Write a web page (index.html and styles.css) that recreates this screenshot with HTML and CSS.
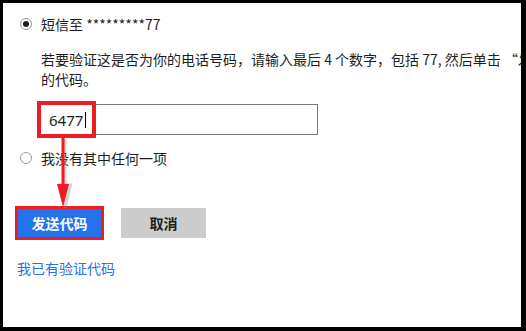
FILE: index.html
```html
<!DOCTYPE html>
<html lang="zh-CN">
<head>
<meta charset="utf-8">
<title>验证</title>
<link rel="stylesheet" href="styles.css">
</head>
<body>
<div class="frame">
  <div class="option">
    <span class="radio checked"></span>
    <span class="label">短信至 *********77</span>
  </div>
  <p class="hint">若要验证这是否为你的电话号码，请输入最后 4 个数字，包括 77, 然后单击 “发送代码”以获取你<br>的代码。</p>
  <div class="field">
    <div class="input"><span class="value">6477</span><span class="caret"></span></div>
    <div class="mark"></div>
  </div>
  <div class="option second">
    <span class="radio"></span>
    <span class="label">我没有其中任何一项</span>
  </div>
  <div class="actions">
    <button class="btn primary">发送代码</button>
    <button class="btn secondary">取消</button>
  </div>
  <a class="link" href="#">我已有验证代码</a>
  <svg class="arrow" width="26" height="76" viewBox="0 0 26 76">
    <path d="M13 4 V52 M7.5 50 L13 73 L18.5 50 Z" fill="#888" stroke="#888" stroke-width="3" opacity="0.35" transform="translate(2,1)"/>
    <rect x="11.5" y="4" width="3" height="48" fill="#ee1c25"/>
    <path d="M7 50 L13 73 L19 50 Z" fill="#ee1c25"/>
  </svg>
</div>
</body>
</html>
```

FILE: styles.css
```css
html, body {
  margin: 0;
  padding: 0;
  background: #000;
}
.frame {
  position: relative;
  margin: 3px 0 0 3px;
  width: 518px;
  height: 324px;
  background: #fff;
  overflow: hidden;
  box-sizing: border-box;
  padding: 11px 0 0 14px;
  font-family: "Noto Sans CJK SC", "Noto Sans", sans-serif;
  font-size: 14px;
  color: #1e1e1e;
}
.option {
  display: flex;
  align-items: center;
  height: 20px;
  line-height: 20px;
}
.option.second {
  margin-top: 13px;
}
.radio {
  width: 12px;
  height: 12px;
  margin-left: 3px;
  margin-right: 9px;
  border: 1px solid #9a9a9a;
  border-radius: 50%;
  box-sizing: border-box;
  display: flex;
  align-items: center;
  justify-content: center;
}
.radio.checked::after {
  content: "";
  width: 6px;
  height: 6px;
  border-radius: 50%;
  background: #1e1e1e;
}
.label {
  white-space: nowrap;
}
.hint {
  margin: 15px 0 0 24px;
  line-height: 20px;
  white-space: nowrap;
}
.field {
  position: relative;
  margin: 15px 0 0 20px;
  width: 281px;
}
.input {
  height: 31px;
  box-sizing: border-box;
  border: 1px solid #7a7a7a;
  display: flex;
  align-items: center;
  padding-left: 11px;
  font-family: "Noto Sans", "Open Sans", sans-serif;
  font-size: 15px;
  color: #1e1e1e;
}
.caret {
  width: 1px;
  height: 16px;
  margin-left: 2px;
  background: #000;
}
.mark {
  position: absolute;
  left: 0;
  top: -3px;
  width: 59px;
  height: 37px;
  box-sizing: border-box;
  border: 4px solid #ee1c25;
}
.actions {
  display: flex;
  gap: 19px;
  margin-top: 40px;
}
.btn {
  width: 85px;
  height: 30px;
  border: none;
  padding: 0;
  font-family: "Noto Sans CJK SC", "Noto Sans", sans-serif;
  font-size: 14px;
  font-weight: bold;
}
.primary {
  background: #2672ec;
  color: #fff;
  outline: 3px solid #ee1c25;
  outline-offset: -1px;
}
.secondary {
  background: #cccccc;
  color: #1e1e1e;
}
.link {
  display: block;
  margin-top: 20px;
  line-height: 20px;
  color: #2672ec;
  text-decoration: none;
  width: max-content;
}
.arrow {
  position: absolute;
  left: 47px;
  top: 131px;
}
```
